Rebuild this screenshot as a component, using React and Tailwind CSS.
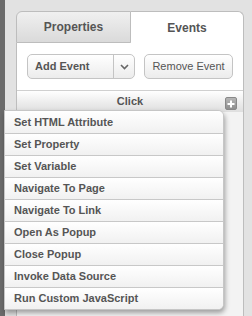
import React from 'react';

const actions = [
  'Set HTML Attribute',
  'Set Property',
  'Set Variable',
  'Navigate To Page',
  'Navigate To Link',
  'Open As Popup',
  'Close Popup',
  'Invoke Data Source',
  'Run Custom JavaScript',
];

const App = () => {
  return (
    <div className="relative w-[252px] h-[316px] overflow-hidden bg-[#e2e2e2] flex font-['Liberation_Sans',Arial,sans-serif] text-[#555]">
      <div className="w-[5px] h-full bg-[#6b6b6b]" />

      {/* panel */}
      <div className="ml-[11px] mt-[11px] w-[228px] flex flex-col">
        <div className="flex h-[32px]">
          <div className="w-[115px] flex items-center justify-center border border-[#bdbdbd] rounded-tl-[6px] bg-gradient-to-b from-[#f0f0f0] to-[#dadada] text-[12px] font-bold">
            Properties
          </div>
          <div className="flex-1 flex items-center justify-center border border-l-0 border-b-0 border-[#bdbdbd] rounded-tr-[6px] bg-white text-[12px] font-bold">
            Events
          </div>
        </div>

        <div className="flex-1 flex flex-col border-x border-[#bdbdbd] bg-[#f3f3f3]">
          <div className="bg-white flex gap-[9px] px-[10px] pt-[11px] pb-[11px] border-b border-[#d0d0d0]">
            <div className="w-[108px] h-[25px] flex border border-[#c4c4c4] rounded-[5px] bg-gradient-to-b from-white to-[#ececec]">
              <div className="flex-1 flex items-center pl-[7px] text-[11px] font-bold">Add Event</div>
              <div className="w-[21px] flex items-center justify-center border-l border-[#c4c4c4]">
                <svg width="9" height="6" viewBox="0 0 9 6" fill="none" stroke="#666" strokeWidth="1.6">
                  <path d="M1 1l3.5 3.5L8 1" />
                </svg>
              </div>
            </div>
            <div className="flex-1 h-[25px] flex items-center justify-center border border-[#c4c4c4] rounded-[5px] bg-gradient-to-b from-white to-[#ececec] text-[11px]">
              Remove Event
            </div>
          </div>

          <div className="relative h-[21px] flex items-center justify-center bg-gradient-to-b from-white to-[#dedede] text-[11px] font-bold">
            Click
            <div className="absolute right-[6px] top-[6px] w-[12px] h-[13px] rounded-[2px] bg-gradient-to-b from-[#b5b5b5] to-[#8f8f8f] border border-[#888] flex items-center justify-center">
              <svg width="8" height="8" viewBox="0 0 8 8" fill="#fff">
                <rect x="3" y="0.5" width="2" height="7" />
                <rect x="0.5" y="3" width="7" height="2" />
              </svg>
            </div>
          </div>
        </div>
      </div>

      {/* action menu */}
      <div className="absolute left-[4px] top-[110px] w-[220px] bg-white border border-[#c6c6c6] rounded-r-[6px] shadow-[1px_3px_5px_rgba(0,0,0,0.35)] overflow-hidden">
        {actions.map((a, i) => (
          <div
            key={a}
            className={`h-[22px] flex items-center pl-[9px] text-[11px] font-bold bg-gradient-to-b from-white to-[#f1f1f1] ${i > 0 ? 'border-t border-[#c8c8c8]' : ''}`}
          >
            {a}
          </div>
        ))}
      </div>
    </div>
  );
};

export default App;
